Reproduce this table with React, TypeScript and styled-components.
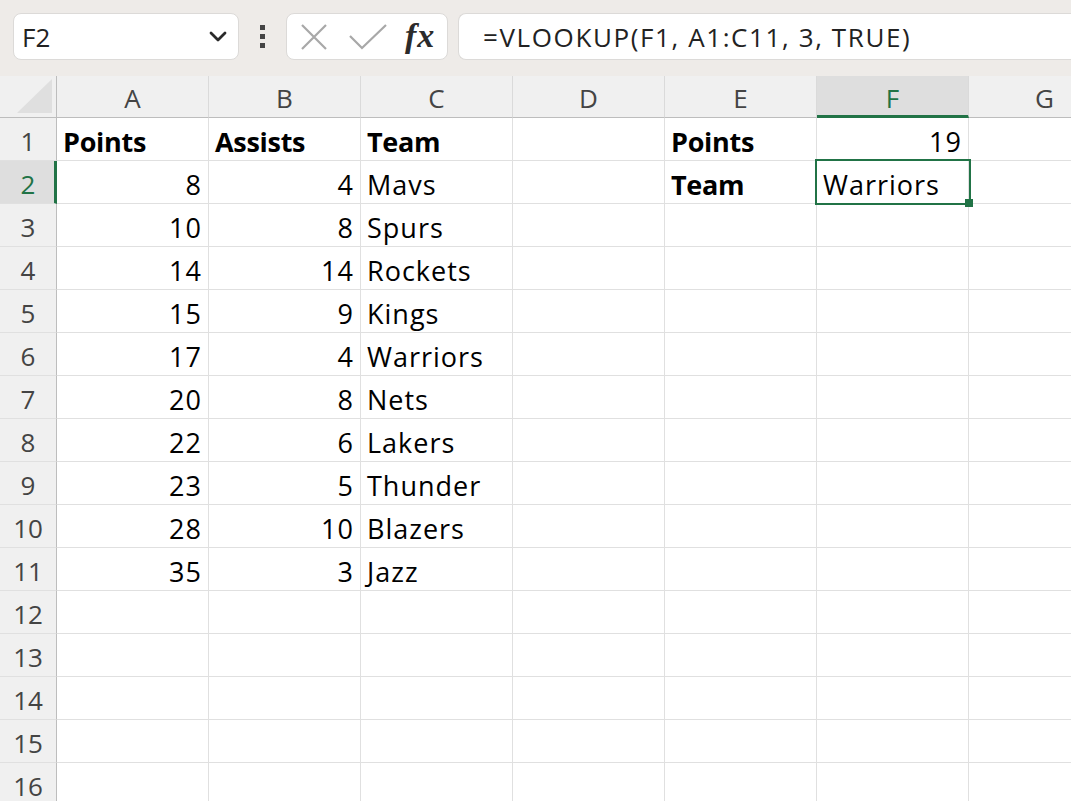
import React from "react";
import styled, { createGlobalStyle, css } from "styled-components";

const Global = createGlobalStyle`
  html, body { margin: 0; padding: 0; }
  body {
    background: #ffffff;
    overflow: hidden;
    font-family: "Open Sans", "Noto Sans", sans-serif;
  }
  * { box-sizing: border-box; }
`;

const Page = styled.div`
  width: 1071px;
  height: 801px;
  overflow: hidden;
  display: flex;
  flex-direction: column;
`;

const Toolbar = styled.div`
  height: 76px;
  flex: none;
  background: #eeebe8;
  display: flex;
  align-items: flex-start;
  padding: 13px 0 0 13px;
`;

const NameBox = styled.div`
  flex: none;
  width: 226px;
  height: 47px;
  background: #ffffff;
  border: 1px solid #dcdad8;
  border-radius: 8px;
  display: flex;
  align-items: center;
  justify-content: space-between;
  padding: 0 11px 0 8px;
  font-size: 26px;
  color: #222;
`;

const Dots = styled.div`
  flex: none;
  width: 47px;
  height: 47px;
  display: flex;
  flex-direction: column;
  align-items: center;
  justify-content: center;
  gap: 4px;
`;

const Dot = styled.span`
  width: 5px;
  height: 5px;
  background: #444;
`;

const FxBox = styled.div`
  flex: none;
  width: 162px;
  height: 47px;
  background: #ffffff;
  border: 1px solid #dcdad8;
  border-radius: 8px;
  display: flex;
  align-items: center;
  padding: 0 0 0 13px;
  gap: 21px;
`;

const FxLabel = styled.span`
  font-family: "Liberation Serif", "DejaVu Serif", serif;
  font-style: italic;
  font-weight: bold;
  font-size: 34px;
  line-height: 1;
  color: #2b2b2b;
  margin-left: -3px;
  margin-top: -2px;
  letter-spacing: 1px;
`;

const FormulaBox = styled.div`
  flex: 1;
  min-width: 0;
  height: 47px;
  margin-left: 10px;
  background: #ffffff;
  border: 1px solid #dcdad8;
  border-right: none;
  border-radius: 8px 0 0 8px;
  display: flex;
  align-items: center;
  padding-left: 24px;
  font-size: 26px;
  letter-spacing: 1.6px;
  color: #222;
  white-space: nowrap;
`;

const Sheet = styled.div`
  flex: 1;
  display: grid;
  grid-template-columns: 57px repeat(7, 152px);
  grid-template-rows: 42px;
  grid-auto-rows: 43px;
  background: #ffffff;
`;

const Corner = styled.div`
  background: #f0f0f0;
  border-right: 1px solid #bdbdbd;
  border-bottom: 1px solid #bdbdbd;
  display: flex;
  align-items: flex-end;
  justify-content: flex-end;
  padding: 0 4px 4px 0;
`;

const ColHead = styled.div<{ $active?: boolean }>`
  background: #f0f0f0;
  border-right: 1px solid #dadada;
  border-bottom: 1px solid #bdbdbd;
  display: flex;
  align-items: center;
  justify-content: center;
  font-size: 26px;
  color: #444;
  padding-top: 2px;
  ${(p) =>
    p.$active &&
    css`
      background: #dedede;
      color: #217346;
      border-bottom: 3px solid #217346;
      padding-top: 4px;
    `}
`;

const RowHead = styled.div<{ $active?: boolean }>`
  background: #f0f0f0;
  border-right: 1px solid #bdbdbd;
  border-bottom: 1px solid #e0e0e0;
  display: flex;
  align-items: flex-end;
  justify-content: center;
  padding-bottom: 5px;
  font-size: 26px;
  line-height: 27px;
  color: #444;
  ${(p) =>
    p.$active &&
    css`
      background: #dedede;
      color: #217346;
      border-right: 3px solid #217346;
      padding-left: 2px;
    `}
`;

const Cell = styled.div<{ $align?: "left" | "right"; $bold?: boolean }>`
  position: relative;
  border-right: 1px solid #e0e0e0;
  border-bottom: 1px solid #e0e0e0;
  display: flex;
  align-items: flex-end;
  justify-content: ${(p) => (p.$align === "right" ? "flex-end" : "flex-start")};
  padding: 0 6px 5px 6px;
  font-size: 27px;
  line-height: 27px;
  letter-spacing: ${(p) => (p.$bold ? "-0.3px" : "1px")};
  font-weight: ${(p) => (p.$bold ? 700 : 400)};
  color: #000;
  white-space: nowrap;
`;

const ActiveFrame = styled.span`
  position: absolute;
  z-index: 2;
  left: -2px;
  top: -2px;
  right: -3px;
  bottom: -2px;
  border: 2.5px solid #217346;
  pointer-events: none;
`;

const FillHandle = styled.span`
  position: absolute;
  z-index: 3;
  right: -5px;
  bottom: -4px;
  width: 8px;
  height: 8px;
  background: #217346;
`;

type CellData = { v: string; align?: "left" | "right"; bold?: boolean };

const cols = ["A", "B", "C", "D", "E", "F", "G"];

const data: Record<number, (CellData | null)[]> = {
  1: [
    { v: "Points", bold: true },
    { v: "Assists", bold: true },
    { v: "Team", bold: true },
    null,
    { v: "Points", bold: true },
    { v: "19", align: "right" },
    null,
  ],
  2: [
    { v: "8", align: "right" },
    { v: "4", align: "right" },
    { v: "Mavs" },
    null,
    { v: "Team", bold: true },
    { v: "Warriors" },
    null,
  ],
};

const rest: [string, string, string][] = [
  ["10", "8", "Spurs"],
  ["14", "14", "Rockets"],
  ["15", "9", "Kings"],
  ["17", "4", "Warriors"],
  ["20", "8", "Nets"],
  ["22", "6", "Lakers"],
  ["23", "5", "Thunder"],
  ["28", "10", "Blazers"],
  ["35", "3", "Jazz"],
];
rest.forEach((r, i) => {
  data[i + 3] = [
    { v: r[0], align: "right" },
    { v: r[1], align: "right" },
    { v: r[2] },
    null,
    null,
    null,
    null,
  ];
});

const XIcon = () => (
  <svg width="28" height="28" viewBox="0 0 28 28">
    <path d="M2 2 L26 26 M26 2 L2 26" stroke="#a8a8a8" strokeWidth="2.2" fill="none" />
  </svg>
);

const CheckIcon = () => (
  <svg width="38" height="28" viewBox="0 0 38 28">
    <path d="M1 13 L13 25 L37 2" stroke="#a8a8a8" strokeWidth="2.2" fill="none" />
  </svg>
);

const Chevron = () => (
  <svg width="18" height="12" viewBox="0 0 18 12">
    <path d="M2 2 L9 9 L16 2" stroke="#2a2a2a" strokeWidth="2.8" fill="none" strokeLinecap="round" strokeLinejoin="round" />
  </svg>
);

const CornerTriangle = () => (
  <svg width="35" height="34" viewBox="0 0 35 34">
    <path d="M35 0 L35 34 L0 34 Z" fill="#dfdfdf" />
  </svg>
);

export default function App() {
  const rows = Array.from({ length: 16 }, (_, i) => i + 1);
  return (
    <Page>
      <Global />
      <Toolbar>
        <NameBox>
          <span>F2</span>
          <Chevron />
        </NameBox>
        <Dots>
          <Dot />
          <Dot />
          <Dot />
        </Dots>
        <FxBox>
          <XIcon />
          <CheckIcon />
          <FxLabel>fx</FxLabel>
        </FxBox>
        <FormulaBox>=VLOOKUP(F1, A1:C11, 3, TRUE)</FormulaBox>
      </Toolbar>
      <Sheet>
        <Corner>
          <CornerTriangle />
        </Corner>
        {cols.map((c) => (
          <ColHead key={c} $active={c === "F"}>
            {c}
          </ColHead>
        ))}
        {rows.map((r) => (
          <React.Fragment key={r}>
            <RowHead $active={r === 2}>{r}</RowHead>
            {cols.map((c, ci) => {
              const d = data[r]?.[ci] ?? null;
              const active = r === 2 && c === "F";
              return (
                <Cell key={c} $align={d?.align} $bold={d?.bold}>
                  {d?.v}
                  {active && (
                    <>
                      <ActiveFrame />
                      <FillHandle />
                    </>
                  )}
                </Cell>
              );
            })}
          </React.Fragment>
        ))}
      </Sheet>
    </Page>
  );
}
